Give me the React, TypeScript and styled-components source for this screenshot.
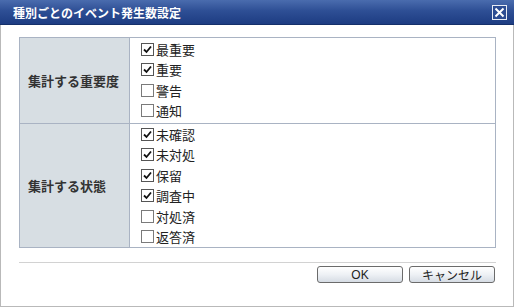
import React from 'react'
import styled, { createGlobalStyle } from 'styled-components'

const GlobalStyle = createGlobalStyle`
  html, body {
    margin: 0;
    padding: 0;
    background: #ffffff;
  }
  body {
    font-family: "Noto Sans CJK JP", "Liberation Sans", sans-serif;
  }
`

type Item = { label: string; checked: boolean }

const severity: Item[] = [
  { label: '最重要', checked: true },
  { label: '重要', checked: true },
  { label: '警告', checked: false },
  { label: '通知', checked: false },
]

const status: Item[] = [
  { label: '未確認', checked: true },
  { label: '未対処', checked: true },
  { label: '保留', checked: true },
  { label: '調査中', checked: true },
  { label: '対処済', checked: false },
  { label: '返答済', checked: false },
]

function CheckRow({ label, checked }: Item) {
  return (
    <Option>
      <Box checked={checked}>
        {checked && (
          <svg width="9" height="9" viewBox="0 0 9 9">
            <path d="M1 4.5 L3.5 7 L8 1.5" fill="none" stroke="#111" strokeWidth="1.8" />
          </svg>
        )}
      </Box>
      <span>{label}</span>
    </Option>
  )
}

function EventCountDialog() {
  return (
    <>
      <GlobalStyle />
      <Dialog>
        <TitleBar>
          <Title>種別ごとのイベント発生数設定</Title>
          <CloseButton>
            <svg width="11" height="11" viewBox="0 0 11 11">
              <path d="M1.5 1.5 L9.5 9.5 M9.5 1.5 L1.5 9.5" stroke="#fff" strokeWidth="2" />
            </svg>
          </CloseButton>
        </TitleBar>

        <Body>
          <Settings>
            <Label>集計する重要度</Label>
            <Options>
              {severity.map((i) => (
                <CheckRow key={i.label} {...i} />
              ))}
            </Options>
            <Label last>集計する状態</Label>
            <Options last>
              {status.map((i) => (
                <CheckRow key={i.label} {...i} />
              ))}
            </Options>
          </Settings>

          <Divider />

          <Footer>
            <Button>OK</Button>
            <Button>キャンセル</Button>
          </Footer>
        </Body>
      </Dialog>
    </>
  )
}

const Dialog = styled.div`
  width: 514px;
  height: 307px;
  box-sizing: border-box;
  border: 1px solid #b9b9b9;
  border-top: none;
  background: #fff;
  display: flex;
  flex-direction: column;
`

const TitleBar = styled.div`
  height: 25px;
  margin: 0 -1px;
  display: flex;
  align-items: center;
  justify-content: space-between;
  padding: 0 7px 0 13px;
  background: linear-gradient(to bottom, #4a6cae 0%, #2e4f95 45%, #1d3c82 100%);
  border-bottom: 1px solid #15306a;
  box-sizing: border-box;
`

const Title = styled.span`
  color: #fff;
  font-size: 12px;
  font-weight: bold;
`

const CloseButton = styled.div`
  width: 15px;
  height: 15px;
  box-sizing: border-box;
  border: 1px solid #e8ecf4;
  display: flex;
  align-items: center;
  justify-content: center;
  background: #2c4c92;
`

const Body = styled.div`
  padding: 12px 17px 0 18px;
  display: flex;
  flex-direction: column;
`

const Settings = styled.div`
  display: grid;
  grid-template-columns: 110px 1fr;
  border: 1px solid #a9b3c3;
`

const Label = styled.div<{ last?: boolean }>`
  background: #d7dee3;
  border-right: 1px solid #a9b3c3;
  border-bottom: ${(p) => (p.last ? 'none' : '1px solid #a9b3c3')};
  display: flex;
  align-items: center;
  padding-left: 8px;
  font-size: 13px;
  font-weight: bold;
  color: #333;
`

const Options = styled.div<{ last?: boolean }>`
  display: flex;
  flex-direction: column;
  padding: ${(p) => (p.last ? '0 0 0 11px' : '1px 0 2px 11px')};
  border-bottom: ${(p) => (p.last ? 'none' : '1px solid #a9b3c3')};
`

const Option = styled.div`
  height: 20.5px;
  display: flex;
  align-items: center;
  gap: 2px;
  font-size: 13px;
  color: #222;
`

const Box = styled.span<{ checked: boolean }>`
  width: 13px;
  height: 13px;
  box-sizing: border-box;
  border: 1px solid ${(p) => (p.checked ? '#555' : '#7a7a7a')};
  background: #fff;
  display: flex;
  align-items: center;
  justify-content: center;
`

const Divider = styled.div`
  height: 1px;
  background: #d2d2d2;
  margin-top: 14px;
`

const Footer = styled.div`
  display: flex;
  justify-content: flex-end;
  gap: 6px;
  margin-top: 3px;
  padding-right: 1px;
`

const Button = styled.div`
  width: 86px;
  height: 17px;
  box-sizing: border-box;
  border: 1px solid #6b6b6b;
  border-radius: 3px;
  background: linear-gradient(to bottom, #ffffff 0%, #eef1f5 50%, #d6dce4 100%);
  display: flex;
  align-items: center;
  justify-content: center;
  font-size: 12px;
  color: #222;
  font-family: "Liberation Sans", "Noto Sans CJK JP", sans-serif;
`

export default EventCountDialog
